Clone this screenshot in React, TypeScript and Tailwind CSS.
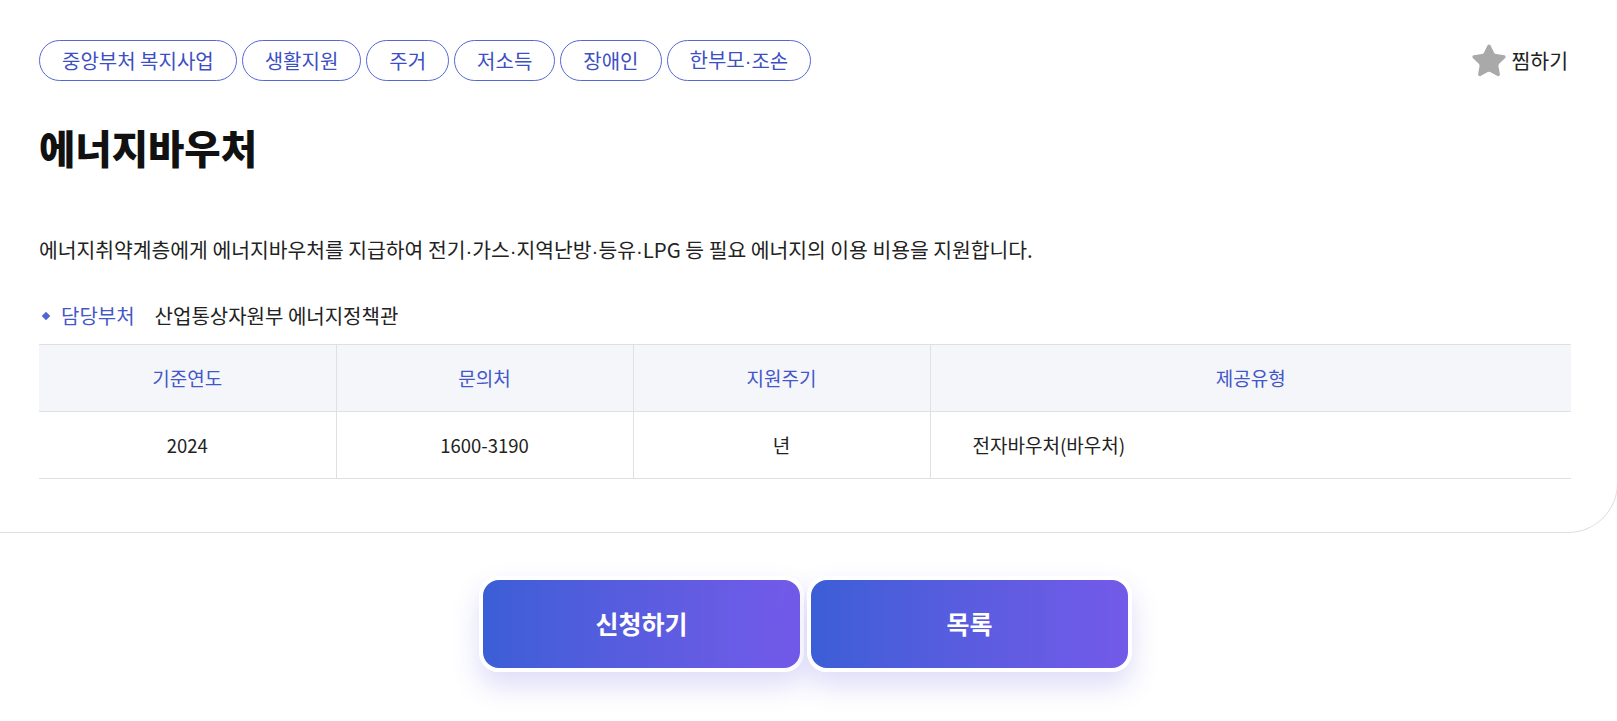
import { Star } from "lucide-react";

const tags = ["중앙부처 복지사업", "생활지원", "주거", "저소득", "장애인", "한부모·조손"];

const columns = [
  { head: "기준연도", value: "2024" },
  { head: "문의처", value: "1600-3190" },
  { head: "지원주기", value: "년" },
];

// narrow middle dot, the CJK one is full width
function withDots(text: string) {
  const parts = text.split("·");
  return parts.map((p, i) => (
    <span key={i}>
      {p}
      {i < parts.length - 1 && <span className="font-['Liberation_Sans']">·</span>}
    </span>
  ));
}

export default function App() {
  return (
    <div
      className="min-h-screen bg-white overflow-hidden text-[#222]"
      style={{ fontFamily: '"Noto Sans CJK KR", "Noto Sans", sans-serif' }}
    >
      <div className="mr-[-1px] bg-white border-r border-b border-[#dedfe3] rounded-br-[50px] pl-[39px] pr-[46px] pt-[40px] pb-[53px]">
        <div className="flex items-center justify-between">
          <div className="flex gap-[5px]">
            {tags.map((t) => (
              <span
                key={t}
                className="h-[41px] px-[22px] flex items-center rounded-full border border-[#5567d3] text-[#3d4fc4] text-[20px] leading-none"
              >
                {withDots(t)}
              </span>
            ))}
          </div>
          <button className="flex items-center gap-[3px] text-[20.5px] text-[#222] mr-[3px]">
            <Star size={38} className="fill-[#a9a9a9] text-[#a9a9a9]" strokeWidth={1} />
            찜하기
          </button>
        </div>

        <h1 className="mt-[42px] text-[39.5px] leading-[47px] font-extrabold text-[#111]">에너지바우처</h1>

        <p className="mt-[66px] text-[20.4px] leading-[27px] text-[#222]">
          {withDots("에너지취약계층에게 에너지바우처를 지급하여 전기·가스·지역난방·등유·LPG 등 필요 에너지의 이용 비용을 지원합니다.")}
        </p>

        <div className="mt-[37px] flex items-center text-[20px] leading-[27px]">
          <span className="w-[6px] h-[6px] bg-[#5066d6] rotate-45 ml-[4px] mr-[12px]" />
          <span className="text-[#4457c9] mr-[20px]">담당부처</span>
          <span className="text-[#222]">산업통상자원부 에너지정책관</span>
        </div>

        <table className="mt-[15px] w-full border-collapse text-[19px]">
          <thead>
            <tr className="bg-[#f5f6fa] border-t border-b border-[#dfe0e4]">
              {columns.map((c) => (
                <th key={c.head} className="w-[297px] h-[67px] font-normal text-[#4457c9] border-r border-[#dfe0e4]">
                  {c.head}
                </th>
              ))}
              <th className="h-[67px] font-normal text-[#4457c9]">제공유형</th>
            </tr>
          </thead>
          <tbody>
            <tr className="border-b border-[#dfe0e4]">
              {columns.map((c) => (
                <td key={c.head} className="h-[67px] text-center text-[#222] border-r border-[#dfe0e4]">
                  <span className={/\d/.test(c.value) ? "text-[18.5px]" : "text-[19px]"}>{c.value}</span>
                </td>
              ))}
              <td className="h-[67px] pl-[42px] text-left text-[#222]">전자바우처(바우처)</td>
            </tr>
          </tbody>
        </table>
      </div>

      <div className="mt-[43px] flex justify-center gap-[3px] pr-[6px]">
        {["신청하기", "목록"].map((label) => (
          <button
            key={label}
            className="w-[325px] h-[96px] rounded-[20px] border-[4px] border-white bg-gradient-to-r from-[#3b5ed6] to-[#735ae9] text-white text-[25px] font-bold shadow-[0_14px_28px_rgba(86,80,220,0.2)]"
          >
            {label}
          </button>
        ))}
      </div>
    </div>
  );
}
